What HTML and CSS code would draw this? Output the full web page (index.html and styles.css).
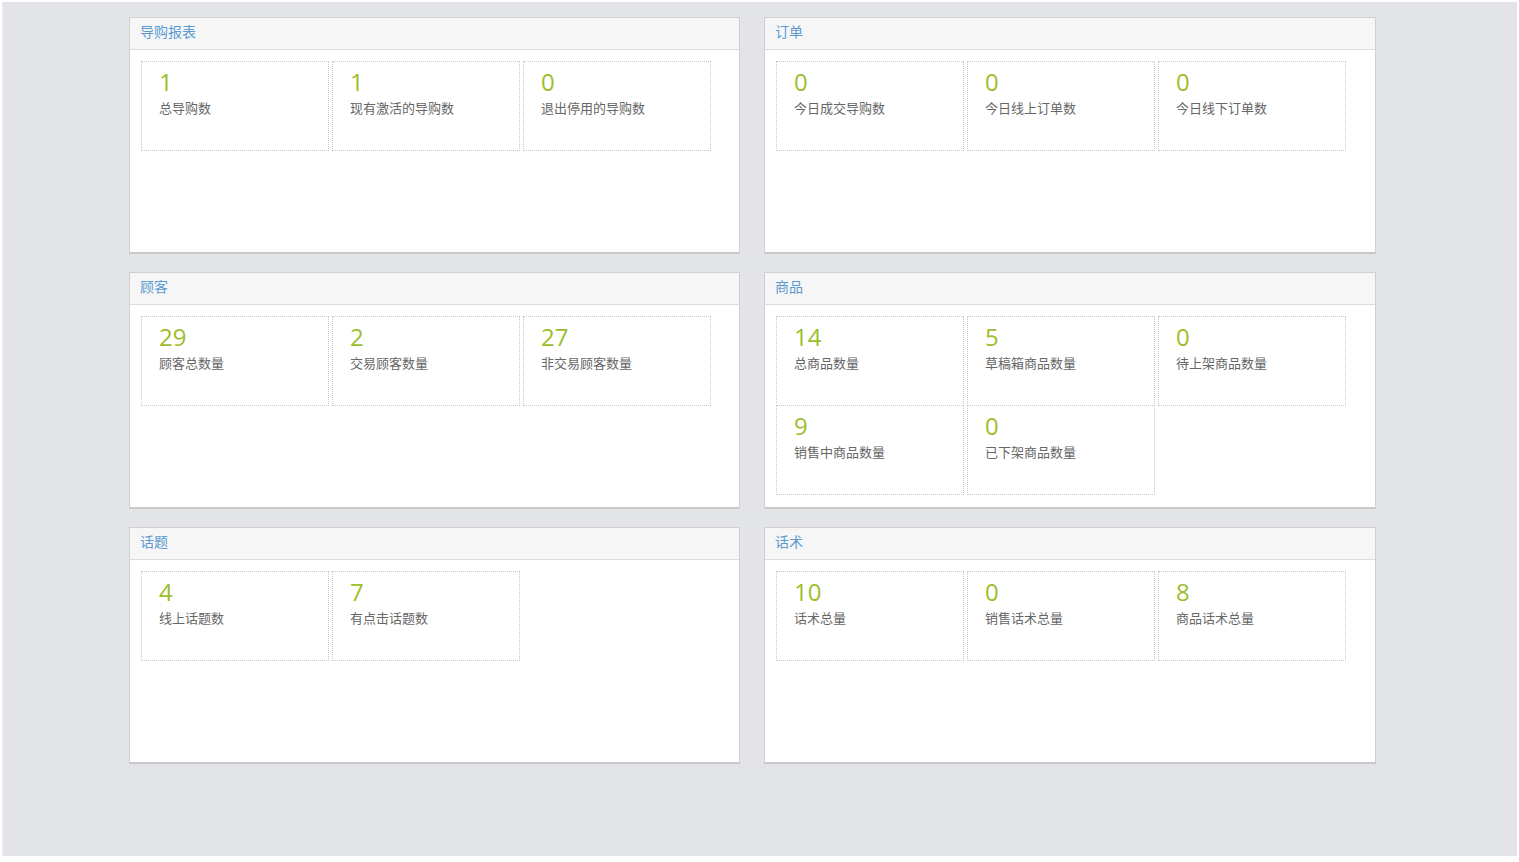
FILE: index.html
```html
<!DOCTYPE html>
<html lang="zh-CN">
<head>
<meta charset="utf-8">
<title>统计</title>
<link rel="stylesheet" href="styles.css">
</head>
<body>
<div class="page">
  <div class="board">
    <section class="panel">
      <div class="panel-head">导购报表</div>
      <div class="panel-body">
        <div class="stat"><div class="num">1</div><div class="label">总导购数</div></div>
        <div class="stat"><div class="num">1</div><div class="label">现有激活的导购数</div></div>
        <div class="stat"><div class="num">0</div><div class="label">退出停用的导购数</div></div>
      </div>
    </section>
    <section class="panel">
      <div class="panel-head">订单</div>
      <div class="panel-body">
        <div class="stat"><div class="num">0</div><div class="label">今日成交导购数</div></div>
        <div class="stat"><div class="num">0</div><div class="label">今日线上订单数</div></div>
        <div class="stat"><div class="num">0</div><div class="label">今日线下订单数</div></div>
      </div>
    </section>
    <section class="panel">
      <div class="panel-head">顾客</div>
      <div class="panel-body">
        <div class="stat"><div class="num">29</div><div class="label">顾客总数量</div></div>
        <div class="stat"><div class="num">2</div><div class="label">交易顾客数量</div></div>
        <div class="stat"><div class="num">27</div><div class="label">非交易顾客数量</div></div>
      </div>
    </section>
    <section class="panel">
      <div class="panel-head">商品</div>
      <div class="panel-body">
        <div class="stat"><div class="num">14</div><div class="label">总商品数量</div></div>
        <div class="stat"><div class="num">5</div><div class="label">草稿箱商品数量</div></div>
        <div class="stat"><div class="num">0</div><div class="label">待上架商品数量</div></div>
        <div class="stat"><div class="num">9</div><div class="label">销售中商品数量</div></div>
        <div class="stat"><div class="num">0</div><div class="label">已下架商品数量</div></div>
      </div>
    </section>
    <section class="panel">
      <div class="panel-head">话题</div>
      <div class="panel-body">
        <div class="stat"><div class="num">4</div><div class="label">线上话题数</div></div>
        <div class="stat"><div class="num">7</div><div class="label">有点击话题数</div></div>
      </div>
    </section>
    <section class="panel">
      <div class="panel-head">话术</div>
      <div class="panel-body">
        <div class="stat"><div class="num">10</div><div class="label">话术总量</div></div>
        <div class="stat"><div class="num">0</div><div class="label">销售话术总量</div></div>
        <div class="stat"><div class="num">8</div><div class="label">商品话术总量</div></div>
      </div>
    </section>
  </div>
</div>
</body>
</html>
```

FILE: styles.css
```css
html, body {
  margin: 0;
  padding: 0;
  background: #ffffff;
}

body {
  font-family: "Noto Sans CJK SC", "Noto Sans", sans-serif;
}

.page {
  margin: 2px 2px 0 2px;
  width: 1515px;
  height: 854px;
  box-sizing: border-box;
  background: #e3e4e8;
  border-left: 1px solid #ebecef;
  padding: 15px 0 0 126px;
}

.board {
  display: grid;
  grid-template-columns: 611px 612px;
  grid-auto-rows: 237px;
  column-gap: 24px;
  row-gap: 18px;
}

.panel {
  background: #ffffff;
  border: 1px solid #d0d0d0;
  border-bottom: 2px solid #c9c9c9;
  box-sizing: border-box;
}

.panel-head {
  height: 31px;
  line-height: 27px;
  padding-left: 10px;
  background: #f6f6f6;
  border-bottom: 1px solid #dcdcdc;
  color: #5b9bd0;
  font-size: 14px;
}

.panel-body {
  padding: 11px 0 0 11px;
  display: grid;
  grid-template-columns: repeat(3, 188px);
  column-gap: 3px;
  grid-auto-rows: 89px;
}

.stat {
  height: 90px;
  box-sizing: border-box;
  border: 1px dotted #c8c8c8;
  padding: 5px 0 0 17px;
}

.num {
  font-family: "Open Sans", "Noto Sans", sans-serif;
  font-size: 24px;
  line-height: 30px;
  color: #9cbe2b;
}

.label {
  font-size: 13px;
  line-height: 20px;
  color: #666666;
  margin-top: 1px;
}
```
